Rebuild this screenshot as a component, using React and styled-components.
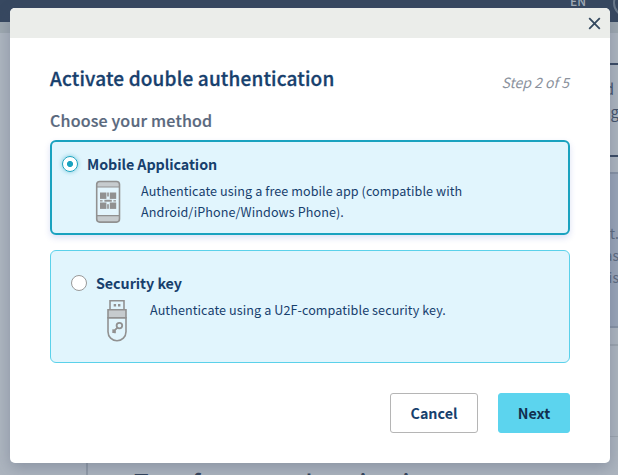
import React, { useState } from "react";
import styled, { createGlobalStyle, css } from "styled-components";

const GlobalStyle = createGlobalStyle`
  * { box-sizing: border-box; }
  html, body { margin: 0; padding: 0; }
  body {
    font-family: "Noto Sans CJK SC", "Noto Sans", sans-serif;
    color: #17406d;
    overflow: hidden;
  }
`;

const Screen = styled.div`
  position: relative;
  width: 618px;
  height: 475px;
  overflow: hidden;
  background: #adb5bf;
`;

const Backdrop = styled.div`
  display: flex;
  flex-direction: column;
  height: 475px;
`;

const TopBar = styled.div`
  display: flex;
  justify-content: flex-end;
  align-items: flex-start;
  gap: 27px;
  flex: none;
  height: 22px;
  background: #374860;
`;

const Language = styled.span`
  margin-top: -8px;
  color: #a3adb9;
  font-size: 12px;
  line-height: 18px;
  font-weight: 500;
`;

const Avatar = styled.span`
  width: 28px;
  height: 28px;
  margin: -11px -23px 0 0;
  border: 2px solid #69788a;
  border-radius: 50%;
`;

const Strip = styled.div`
  flex: none;
  height: 11px;
  background: #9ea8b0;
`;

const SideColumn = styled.div`
  align-self: flex-end;
  width: 18px;
  height: 405px;
  padding-top: 30px;
  flex: none;
`;

const SideNote = styled.div`
  height: 94px;
  padding-top: 12px;
  border-top: 2px solid #3a4a63;
  border-bottom: 2px solid #3a4a63;
  color: #43536b;
  font-size: 15px;
  line-height: 23px;
  text-align: right;
  white-space: nowrap;
`;

const SideLine = styled.div`
  margin-right: ${(p) => p.$shift}px;
`;

const SidePanel = styled.div`
  height: 156px;
  margin-top: 15px;
  padding: 48px 0 0;
  border-top: 2px solid #8793a5;
  border-bottom: 2px solid #8793a5;
  background: #99a5b8;
  color: #5d6c81;
  font-size: 14px;
  line-height: 22px;
  text-align: right;
`;

const SideRule = styled.div`
  height: ${(p) => p.$size}px;
  margin-top: ${(p) => p.$gap}px;
  background: #9ca5af;
`;

const Section = styled.div`
  display: flex;
  flex: none;
  width: 520px;
  height: 37px;
  margin-left: 86px;
  padding: 26px 0 0 46px;
  border-left: 2px solid #929ca8;
`;

const SectionTitle = styled.div`
  color: #34445c;
  font-size: 24px;
  line-height: 36px;
  font-weight: 500;
  letter-spacing: 0.25px;
  white-space: nowrap;
`;

const Modal = styled.section`
  position: absolute;
  top: 8px;
  left: 10px;
  display: flex;
  flex-direction: column;
  width: 600px;
  height: 455px;
  overflow: hidden;
  border-radius: 5px;
  background: #fff;
`;

const ModalShadow = styled.div`
  position: absolute;
  inset: 8px 8px 12px 10px;
  border-radius: 5px;
  box-shadow: 0 5px 15px rgba(60, 70, 100, 0.3);
`;

const ModalHeader = styled.header`
  display: flex;
  justify-content: flex-end;
  align-items: center;
  height: 30px;
  padding-right: 9px;
  background: #ebedea;
`;

const CloseButton = styled.button`
  display: flex;
  padding: 0;
  border: 0;
  background: none;
`;

const ModalBody = styled.div`
  padding: 25px 40px 0;
`;

const TitleRow = styled.div`
  display: flex;
  justify-content: space-between;
  height: 34px;
`;

const Title = styled.h1`
  margin: 0;
  font-size: 19px;
  line-height: 30px;
  font-weight: 500;
  letter-spacing: 0.16px;
  -webkit-text-stroke: 0.3px currentColor;
  white-space: nowrap;
`;

const Step = styled.span`
  padding: 6px 1px 0 0;
  color: #8b929d;
  font-size: 14px;
  line-height: 26px;
  font-style: italic;
  white-space: nowrap;
`;

const Subtitle = styled.h2`
  height: 43px;
  margin: 0;
  padding-top: 10px;
  color: #59687d;
  font-size: 16px;
  line-height: 26px;
  font-weight: 500;
  letter-spacing: 0.19px;
  -webkit-text-stroke: 0.2px currentColor;
`;

const Options = styled.div`
  display: flex;
  flex-direction: column;
  gap: 15px;
`;

const Option = styled.label`
  display: block;
  height: 113px;
  padding: 20px;
  border: 1px solid #5bd1ea;
  border-radius: 6px;
  background: #e1f5fd;
  ${(p) =>
    p.$selected &&
    css`
      height: 95px;
      padding: 10px;
      border: 2px solid #1aa2bf;
      box-shadow: 0 3px 6px rgba(60, 90, 200, 0.18);
    `}
`;

const OptionHead = styled.div`
  display: flex;
  align-items: center;
  gap: 9px;
  height: 24px;
`;

const Radio = styled.input`
  appearance: none;
  width: 16px;
  height: 16px;
  margin: 0;
  border: 1px solid #999;
  border-radius: 50%;
  background: #fff;
  &:checked {
    border-color: #1aa2bf;
    background: radial-gradient(circle, #1aa2bf 2.7px, #fff 3.4px);
    box-shadow: 0 0 4px rgba(26, 162, 191, 0.55);
  }
`;

const OptionName = styled.span`
  font-size: 14.3px;
  line-height: 24px;
  font-weight: 700;
  letter-spacing: -0.06px;
  white-space: nowrap;
`;

const OptionDetail = styled.div`
  display: grid;
  grid-template-columns: 34px 1fr;
  column-gap: 16px;
  padding-left: 29px;
`;

const Description = styled.span`
  padding-top: 4px;
  font-size: 12.6px;
  line-height: 21px;
  letter-spacing: 0.08px;
  white-space: nowrap;
`;

const Actions = styled.footer`
  display: flex;
  justify-content: flex-end;
  gap: 20px;
  padding: 30px 0 0;
`;

const Button = styled.button`
  width: ${(p) => (p.$primary ? 72 : 88)}px;
  height: 40px;
  padding: 0;
  border: 1px solid ${(p) => (p.$primary ? "#5cd4ee" : "#b5b5b5")};
  border-radius: 3px;
  background: ${(p) => (p.$primary ? "#5cd4ee" : "#fff")};
  color: ${(p) => (p.$primary ? "#12304f" : "#17406d")};
  font-family: inherit;
  font-size: 14.3px;
  line-height: 24px;
  font-weight: 700;
`;

const IconSlot = styled.span`
  display: flex;
  padding: 4px 0 0 ${(p) => p.$inset}px;
`;

const qrBlocks = [
  [5, 12.5, 6.4, 6.4], [14.8, 12.5, 6.4, 6.4],
  [5, 22.5, 6.4, 6.4], [14.8, 22.5, 6.4, 6.4],
  [12.2, 12.5, 1.6, 4], [9.4, 19.8, 7.4, 1.9],
  [5, 20.2, 2.6, 1.3], [18.4, 20.2, 2.6, 1.3], [12.2, 24.2, 1.6, 4.6],
];

const MobileIcon = () => (
  <svg width="26" height="44" viewBox="0 0 26 44" fill="none">
    <rect x="1.7" y="1.5" width="22.8" height="40.6" rx="3" fill="#c6cbce" />
    <path d="M2 7h22v28.5H2z" fill="#e3f5fd" />
    <path d="M2 7h22M2 35.7h22" stroke="#919191" strokeWidth="1.2" />
    <rect x="1.7" y="1.5" width="22.8" height="40.6" rx="3" stroke="#919191" strokeWidth="1.6" />
    <g fill="#919191">
      {qrBlocks.map(([x, y, width, height]) => (
        <rect key={`${x}-${y}`} x={x} y={y} width={width} height={height} />
      ))}
    </g>
  </svg>
);

const KeyIcon = () => (
  <svg width="22" height="44" viewBox="0 0 22 44" fill="none" stroke="#919191" strokeWidth="1.6">
    <path d="M4 10V1.7h14V10" />
    <path d="M2 10.7h18v8H2z" fill="#c6cbce" />
    <path d="M2 18.7v14a9 9 0 0 0 18 0v-14z" />
    <path d="M7.7 6.3h2.4M12 6.3h2.4" strokeWidth="2.4" />
    <circle cx="13.4" cy="26.6" r="2.8" strokeWidth="1.8" />
    <path d="M11.4 28.7L6.4 33.7M8.4 31.7l-2-1M9 31.4v2.9" strokeWidth="1.7" />
  </svg>
);

const methods = [
  {
    id: "mobile",
    name: "Mobile Application",
    lines: ["Authenticate using a free mobile app (compatible with", "Android/iPhone/Windows Phone)."],
    icon: <MobileIcon />,
    inset: 4,
  },
  {
    id: "key",
    name: "Security key",
    lines: ["Authenticate using a U2F-compatible security key."],
    icon: <KeyIcon />,
    inset: 6,
  },
];

export default function App() {
  const [method, setMethod] = useState("mobile");
  return (
    <>
      <GlobalStyle />
      <Screen>
        <Backdrop>
          <TopBar>
            <Language>EN</Language>
            <Avatar />
          </TopBar>
          <Strip />
          <SideColumn>
            <SideNote>
              <SideLine $shift={4}>d</SideLine>
              <SideLine $shift={-1}>g</SideLine>
            </SideNote>
            <SidePanel>
              <SideLine $shift={-1}>t.</SideLine>
              <SideLine $shift={-1}>as</SideLine>
              <SideLine $shift={-1}>is</SideLine>
            </SidePanel>
            <SideRule $gap={16} $size={2} />
            <SideRule $gap={90} $size={1} />
          </SideColumn>
          <Section>
            <SectionTitle>Two-factor authentication</SectionTitle>
          </Section>
        </Backdrop>
        <ModalShadow />
        <Modal>
          <ModalHeader>
            <CloseButton aria-label="Close">
              <svg width="13" height="13" viewBox="0 0 13 13" stroke="#34495f" strokeWidth="1.8">
                <path d="M1.2 1.2l10.6 10.6M11.8 1.2l-10.6 10.6" />
              </svg>
            </CloseButton>
          </ModalHeader>
          <ModalBody>
            <TitleRow>
              <Title>Activate double authentication</Title>
              <Step>Step 2 of 5</Step>
            </TitleRow>
            <Subtitle>Choose your method</Subtitle>
            <Options>
              {methods.map((m) => (
                <Option key={m.id} $selected={method === m.id}>
                  <OptionHead>
                    <Radio
                      type="radio"
                      name="method"
                      checked={method === m.id}
                      onChange={() => setMethod(m.id)}
                    />
                    <OptionName>{m.name}</OptionName>
                  </OptionHead>
                  <OptionDetail>
                    <IconSlot $inset={m.inset}>{m.icon}</IconSlot>
                    <Description>
                      {m.lines.map((line) => (
                        <div key={line}>{line}</div>
                      ))}
                    </Description>
                  </OptionDetail>
                </Option>
              ))}
            </Options>
            <Actions>
              <Button>Cancel</Button>
              <Button $primary>Next</Button>
            </Actions>
          </ModalBody>
        </Modal>
      </Screen>
    </>
  );
}
